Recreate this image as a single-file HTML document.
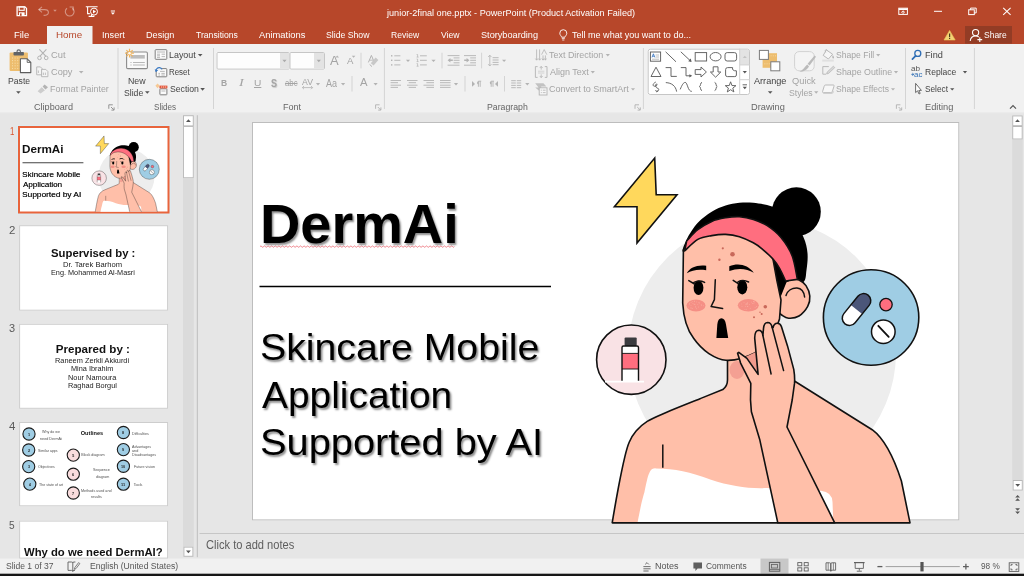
<!DOCTYPE html>
<html><head><meta charset="utf-8"><title>PowerPoint</title>
<style>
html,body{margin:0;padding:0;}
body{width:1024px;height:576px;overflow:hidden;position:relative;background:#E6E6E6;font-family:"Liberation Sans",sans-serif;}
.r{position:absolute;}
.t{position:absolute;white-space:nowrap;line-height:1;transform-origin:0 0;}
#tx{position:absolute;left:0;top:0;width:1024px;height:576px;will-change:transform;}
svg{position:absolute;left:0;top:0;overflow:visible;}
</style></head><body><div id="tx">
<svg width="1024" height="576" viewBox="0 0 1024 576"><rect x="0" y="0" width="1024" height="44" fill="#B7472A"/>
<rect x="47" y="26" width="45.5" height="18" fill="#F1F1F1"/>
<rect x="965" y="26" width="47" height="17.6" fill="#933C25"/>
<rect x="0" y="44" width="1024" height="68.5" fill="#F1F1F1"/>
<rect x="0" y="112.5" width="1024" height="1" fill="#ECECEC"/>
<rect x="0" y="113.5" width="1024" height="445" fill="#E6E6E6"/>
<rect x="0" y="558.5" width="1024" height="15.2" fill="#F1F1F1"/>
<rect x="760.5" y="558.5" width="28" height="15.2" fill="#C8C8C8"/>
<rect x="0" y="573.7" width="1024" height="2.3" fill="#161616"/>
<rect x="183" y="126" width="10.8" height="431" fill="#DBDBDB"/>
<rect x="183" y="115.2" width="10.8" height="11.2" fill="#fff"/><rect x="183.5" y="115.7" width="9.8" height="10.2" fill="none" stroke="#B8B8B8" stroke-width="1"/>
<rect x="183" y="126" width="10.8" height="52.2" fill="#fff"/><rect x="183.5" y="126.5" width="9.8" height="51.2" fill="none" stroke="#BDBDBD" stroke-width="1"/>
<rect x="183.4" y="546.6" width="10" height="10.2" fill="#fff"/><rect x="183.9" y="547.1" width="9" height="9.2" fill="none" stroke="#B8B8B8" stroke-width="1"/>
<rect x="196.8" y="115.2" width="1" height="442" fill="#BEBEBE"/>
<rect x="199.5" y="533" width="824.5" height="1" fill="#C6C6C6"/>
<rect x="1012.2" y="126" width="10.5" height="354" fill="#DBDBDB"/>
<rect x="1012.2" y="115.4" width="10.5" height="10.8" fill="#fff"/><rect x="1012.7" y="115.9" width="9.5" height="9.8" fill="none" stroke="#B8B8B8" stroke-width="1"/>
<rect x="1012.2" y="126" width="10.5" height="13.5" fill="#fff"/><rect x="1012.7" y="126.5" width="9.5" height="12.5" fill="none" stroke="#B8B8B8" stroke-width="1"/>
<rect x="1012.6" y="480" width="10.2" height="10.6" fill="#fff"/><rect x="1013.1" y="480.5" width="9.2" height="9.6" fill="none" stroke="#B8B8B8" stroke-width="1"/>
<rect x="252" y="122" width="707.3" height="398.4" fill="#fff"/><rect x="252.5" y="122.5" width="706.3" height="397.4" fill="none" stroke="#BDBDBD" stroke-width="1"/>
<rect x="117.5" y="48" width="1" height="61" fill="#D4D4D4"/>
<rect x="213.0" y="48" width="1" height="61" fill="#D4D4D4"/>
<rect x="383.9" y="48" width="1" height="61" fill="#D4D4D4"/>
<rect x="642.9" y="48" width="1" height="61" fill="#D4D4D4"/>
<rect x="905.0" y="48" width="1" height="61" fill="#D4D4D4"/>
<rect x="973.9" y="48" width="1" height="61" fill="#D4D4D4"/>
<rect x="360.5" y="52.7" width="1" height="15.700000000000003" fill="#D4D4D4"/>
<rect x="441.5" y="52.7" width="1" height="15.700000000000003" fill="#D4D4D4"/>
<rect x="481.1" y="52.7" width="1" height="15.700000000000003" fill="#D4D4D4"/>
<rect x="351.5" y="76" width="1" height="15.5" fill="#D4D4D4"/>
<rect x="464.5" y="76" width="1" height="15.5" fill="#D4D4D4"/>
<rect x="504.0" y="76" width="1" height="15.5" fill="#D4D4D4"/>
<rect x="216.5" y="52" width="73.5" height="17.6" fill="#FDFDFD" rx="1"/><rect x="217.0" y="52.5" width="72.5" height="16.6" fill="none" stroke="#C6C6C6" stroke-width="1" rx="1"/>
<rect x="280" y="53" width="9" height="15.6" fill="#E3E3E3"/>
<rect x="289.5" y="52" width="35.5" height="17.6" fill="#FDFDFD" rx="1"/><rect x="290.0" y="52.5" width="34.5" height="16.6" fill="none" stroke="#C6C6C6" stroke-width="1" rx="1"/>
<rect x="314" y="53" width="10" height="15.6" fill="#E3E3E3"/>
<rect x="647.7" y="48.7" width="102.3" height="46.3" fill="#fff" rx="2"/><rect x="648.2" y="49.2" width="101.3" height="45.3" fill="none" stroke="#C6C6C6" stroke-width="1" rx="2"/>
<rect x="739.7" y="49.7" width="9.3" height="15" fill="#E3E3E3"/>
<rect x="739.2" y="48.7" width="1" height="46.3" fill="#D0D0D0"/>
<rect x="739.7" y="64.4" width="10.3" height="1" fill="#D0D0D0"/>
<rect x="739.7" y="79.2" width="10.3" height="1" fill="#D0D0D0"/></svg>
<svg width="1024" height="576" viewBox="0 0 1024 576"><defs><clipPath id="sc"><rect x="253" y="123" width="705.5" height="397"/></clipPath><g id="art"><circle cx="762" cy="352.5" r="134" fill="#EDEDED"/>
<path d="M654.7,158L656.2,194.7L677,194.7L637,243L637,206.7L614.4,206.7Z" fill="#FFD85C" stroke="#111" stroke-width="1.6" stroke-linejoin="miter"/>
<path d="M612.2,522.8C613.2,516.8 616.4,498.1 618.5,487.0C620.6,475.9 623.2,463.6 625.0,456.1C626.8,448.6 627.4,446.4 629.2,442.2C631.1,438.0 633.1,434.6 636.1,431.1C639.1,427.6 642.1,424.5 647.2,421.4C652.3,418.2 657.9,416.0 666.7,412.2C675.5,408.4 690.6,402.5 700.0,398.7C709.4,394.9 719.0,391.1 722.8,389.6Q727.5,386 727.5,380L727.5,352L786,352L788,378L794.4,381L872.2,429.7C882,437 892,452 901.4,481L910,522.8Z" fill="#FFBFA9" stroke="#111" stroke-width="1.6" stroke-linejoin="round"/>
<ellipse cx="737" cy="370" rx="7.5" ry="9" fill="#F4A093"/>
<path d="M662.8,444.4V467.8" stroke="#111" stroke-width="1.5"/>
<path d="M637.5,522.8C641,505 642,500 644.4,492.2C647,480 648,475 650,471.5Q652,468 656,468.4C675,468.5 690,472 711,479.7C730,486 750,489 766.7,488L821,490.8Q832,492 832.5,502L833.3,522.8Z" fill="#fff"/>
<path d="M683.2,252.0C681.0,251.9 684.3,244.3 686.7,239.4C689.1,234.5 693.6,227.4 697.8,222.8C702.0,218.2 707.1,214.6 711.7,211.7C716.3,208.8 721.0,207.1 725.6,205.6C730.2,204.1 734.8,203.3 739.4,202.8C744.0,202.3 747.9,202.2 753.3,202.8C758.7,203.4 765.9,204.5 772.0,206.5C778.1,208.5 784.8,210.0 790.0,215.0C795.2,220.0 800.4,230.3 803.3,236.7C806.2,243.1 807.0,247.8 807.5,253.3C808.0,258.9 807.2,265.2 806.5,270.0C805.8,274.8 806.2,280.0 803.5,282.0C800.8,284.0 795.6,284.0 790.0,282.0C784.4,280.0 778.3,277.0 770.0,270.0C761.7,263.0 751.7,245.0 740.0,240.0C728.3,235.0 709.5,238.0 700.0,240.0C690.5,242.0 685.4,252.1 683.2,252.0Z" fill="#000"/>
<circle cx="796.4" cy="211.7" r="24.4" fill="#000"/>
<path d="M781.0,283.0C782.0,282.7 785.0,281.8 786.9,281.2C788.8,280.6 790.1,279.3 792.1,279.1C794.1,278.9 796.7,278.9 799.0,280.0C801.3,281.1 804.2,282.9 806.0,285.6C807.8,288.3 809.5,292.5 809.8,296.0C810.1,299.5 809.5,303.1 807.7,306.4C805.9,309.7 802.2,314.0 799.0,316.0C795.8,318.0 791.5,318.4 788.6,318.2C785.7,318.0 783.8,316.4 781.7,315.0C779.6,313.6 777.0,310.8 776.0,310.0Z" fill="#FFBFA9" stroke="#111" stroke-width="1.6"/>
<path d="M786,295.5C787.5,290.5 792,287.8 797,288C801.5,288.3 804,292 804.6,297" fill="none" stroke="#111" stroke-width="1.5" stroke-linecap="round"/>
<path d="M772,262L790,279L786.9,281.2L778.8,301.5L776,290Z" fill="#000"/>
<path d="M683.4,250L682.7,303C683.5,318 688,331 693.6,338.3C699,346 705,351 708.9,353.6C715,357.5 721,360 726,360.3C736,360.8 746,357.5 754.7,353C765,347 775,334 779.5,319L781,300L777,281L772.8,258L760,240L740,228L712,228L695,234Z" fill="#FFBFA9" stroke="#111" stroke-width="1.6" stroke-linejoin="round"/>
<path d="M686.7,240.8C688.6,239.0 693.6,232.9 697.8,229.7C702.0,226.5 707.1,223.4 711.7,221.4C716.3,219.4 721.0,218.6 725.6,217.8C730.2,217.0 734.8,216.4 739.4,216.7C744.0,217.0 748.7,217.9 753.3,219.4C757.9,220.9 762.6,222.6 767.2,225.6C771.8,228.6 776.8,232.4 781.0,237.5C785.2,242.6 789.5,249.0 792.2,256.0C794.9,263.0 796.5,275.5 797.4,279.4L785.6,281.0C784.6,278.9 781.8,272.3 779.7,268.6C777.6,264.9 775.8,262.2 772.8,258.9C769.8,255.6 765.0,251.3 761.7,248.6C758.5,245.9 757.0,244.8 753.3,242.8C749.6,240.8 744.0,238.1 739.4,236.7C734.8,235.3 730.2,234.6 725.6,234.4C721.0,234.2 716.3,234.8 711.7,235.6C707.1,236.4 702.3,236.8 697.8,239.4C693.3,242.0 686.8,249.1 684.6,251.0Z" fill="#FF6E7F" stroke="#111" stroke-width="1.6" stroke-linejoin="round"/>
<path d="M686.8,273.2C690,267.5 697,264.6 706.2,265.8L706.2,270.3C698,269 692,270.3 686.8,273.2Z" fill="#000"/>
<path d="M729.3,271L729.3,266.3C738,262.6 748,264.5 753.8,272.8C747,268.4 738,267.6 729.3,271Z" fill="#000"/>
<ellipse cx="698.5" cy="287.8" rx="4.9" ry="7.3" fill="#000"/>
<ellipse cx="742.3" cy="287.2" rx="5" ry="7.3" fill="#000"/>
<path d="M688.8,280.6L694.5,284M694,282.4Q699,279.6 704.6,282.4M733.2,280.4L738.2,283.6M738,281.8Q743,279.2 748.6,282" stroke="#111" stroke-width="1.5" fill="none" stroke-linecap="round"/>
<path d="M715.3,279.7L714.4,299.6L711.1,306.5L722.6,308.6" fill="none" stroke="#111" stroke-width="1.5" stroke-linejoin="round" stroke-linecap="round"/>
<ellipse cx="696" cy="305.4" rx="9.5" ry="6" fill="#F58F85"/>
<ellipse cx="748.3" cy="305.3" rx="10.5" ry="6.2" fill="#F58F85"/>
<circle cx="696.4" cy="308.8" r="0.45" fill="#FBB3A6"/>
<circle cx="691.7" cy="308.0" r="0.45" fill="#FBB3A6"/>
<circle cx="694.6" cy="304.6" r="0.45" fill="#FBB3A6"/>
<circle cx="703.3" cy="305.7" r="0.45" fill="#FBB3A6"/>
<circle cx="695.8" cy="307.6" r="0.45" fill="#FBB3A6"/>
<circle cx="701.5" cy="305.3" r="0.45" fill="#FBB3A6"/>
<circle cx="698.9" cy="302.7" r="0.45" fill="#FBB3A6"/>
<circle cx="694.0" cy="304.0" r="0.45" fill="#FBB3A6"/>
<circle cx="691.1" cy="302.2" r="0.45" fill="#FBB3A6"/>
<circle cx="689.2" cy="304.8" r="0.45" fill="#FBB3A6"/>
<circle cx="695.0" cy="304.4" r="0.45" fill="#FBB3A6"/>
<circle cx="696.3" cy="301.9" r="0.45" fill="#FBB3A6"/>
<circle cx="695.6" cy="306.2" r="0.45" fill="#FBB3A6"/>
<circle cx="699.7" cy="303.0" r="0.45" fill="#FBB3A6"/>
<circle cx="694.5" cy="301.2" r="0.45" fill="#FBB3A6"/>
<circle cx="694.3" cy="301.1" r="0.45" fill="#FBB3A6"/>
<circle cx="690.3" cy="307.9" r="0.45" fill="#FBB3A6"/>
<circle cx="688.7" cy="306.9" r="0.45" fill="#FBB3A6"/>
<circle cx="697.8" cy="304.4" r="0.45" fill="#FBB3A6"/>
<circle cx="698.4" cy="307.0" r="0.45" fill="#FBB3A6"/>
<circle cx="701.2" cy="304.7" r="0.45" fill="#FBB3A6"/>
<circle cx="692.9" cy="303.6" r="0.45" fill="#FBB3A6"/>
<circle cx="691.0" cy="305.3" r="0.45" fill="#FBB3A6"/>
<circle cx="692.4" cy="308.2" r="0.45" fill="#FBB3A6"/>
<circle cx="689.4" cy="303.2" r="0.45" fill="#FBB3A6"/>
<circle cx="692.8" cy="301.4" r="0.45" fill="#FBB3A6"/>
<circle cx="753.9" cy="301.6" r="0.45" fill="#FBB3A6"/>
<circle cx="746.6" cy="303.6" r="0.45" fill="#FBB3A6"/>
<circle cx="754.0" cy="301.7" r="0.45" fill="#FBB3A6"/>
<circle cx="753.9" cy="303.3" r="0.45" fill="#FBB3A6"/>
<circle cx="747.4" cy="303.2" r="0.45" fill="#FBB3A6"/>
<circle cx="751.6" cy="302.1" r="0.45" fill="#FBB3A6"/>
<circle cx="747.8" cy="306.5" r="0.45" fill="#FBB3A6"/>
<circle cx="753.7" cy="301.5" r="0.45" fill="#FBB3A6"/>
<circle cx="755.1" cy="307.6" r="0.45" fill="#FBB3A6"/>
<circle cx="745.3" cy="306.3" r="0.45" fill="#FBB3A6"/>
<circle cx="746.2" cy="309.3" r="0.45" fill="#FBB3A6"/>
<circle cx="749.6" cy="304.6" r="0.45" fill="#FBB3A6"/>
<circle cx="746.9" cy="304.6" r="0.45" fill="#FBB3A6"/>
<circle cx="747.3" cy="302.6" r="0.45" fill="#FBB3A6"/>
<circle cx="754.8" cy="302.1" r="0.45" fill="#FBB3A6"/>
<circle cx="739.3" cy="305.1" r="0.45" fill="#FBB3A6"/>
<circle cx="747.4" cy="306.5" r="0.45" fill="#FBB3A6"/>
<circle cx="747.0" cy="304.8" r="0.45" fill="#FBB3A6"/>
<circle cx="750.2" cy="308.2" r="0.45" fill="#FBB3A6"/>
<circle cx="745.6" cy="304.1" r="0.45" fill="#FBB3A6"/>
<circle cx="756.4" cy="306.5" r="0.45" fill="#FBB3A6"/>
<circle cx="744.9" cy="309.6" r="0.45" fill="#FBB3A6"/>
<circle cx="752.7" cy="303.5" r="0.45" fill="#FBB3A6"/>
<circle cx="742.0" cy="306.2" r="0.45" fill="#FBB3A6"/>
<circle cx="744.0" cy="302.4" r="0.45" fill="#FBB3A6"/>
<circle cx="741.7" cy="303.9" r="0.45" fill="#FBB3A6"/>
<circle cx="732.5" cy="254.2" r="2.3" fill="#C9685A"/>
<circle cx="722.8" cy="248.3" r="1.1" fill="#C9685A"/>
<circle cx="719.4" cy="259.7" r="1.2" fill="#C9685A"/>
<circle cx="765.3" cy="306.7" r="1.8" fill="#C9685A"/>
<circle cx="761.7" cy="313.9" r="1" fill="#C9685A"/>
<circle cx="754" cy="317.3" r="1" fill="#C9685A"/>
<circle cx="760" cy="312.3" r="0.7" fill="#C9685A"/>
<path d="M716.4,338L717.3,324.5Q718,318.2 721.4,318.2Q725,318.2 726,324.5L728.2,338Z" fill="#000"/>
<path d="M744,357.5L756,352L758.5,375Z" fill="#F29A8C"/>
<path d="M777.8,522.8L759.7,439.4L751.4,411.7L750.5,400.0L750.8,383.4L746.9,375.6L740.6,363.1L737.6,353.2L738.8,352.4L746.9,358.4L758.1,374.4L754.7,338.1Q754.8,330.5 758.6,330.3Q762.2,330.3 762.9,335.5L763.5,328.5Q764,322.6 767.6,322.5Q771.2,322.5 772.2,327.5L773.1,327.5Q774,323.3 777.3,323.3Q780.4,323.3 781.4,326.6L787.5,345.9L793.75,369.4Q795,377 794.5,383.4L792.2,400L787,427L834.7,522.8Z" fill="#FFBFA9" stroke="#111" stroke-width="1.6" stroke-linejoin="round"/>
<path d="M762.9,335.5L771.1,374M772.2,327.5L783.6,370.6" stroke="#111" stroke-width="1.5" fill="none" stroke-linecap="round"/>
<path d="M612.2,522.8H910" stroke="#111" stroke-width="1.6"/>
<circle cx="631.3" cy="359.7" r="34.7" fill="#F9E2E5" stroke="#111" stroke-width="1.6"/>
<rect x="624.6" y="337.4" width="12.1" height="8.6" rx="1" fill="#3B3B3F"/>
<rect x="622" y="346" width="16.5" height="35" fill="#fff"/>
<rect x="622" y="353.4" width="16.5" height="15.6" fill="#FF6E7F"/>
<path d="M622,381V347.5Q622,346 623.5,346H637Q638.5,346 638.5,347.5V381" fill="none" stroke="#111" stroke-width="1.4"/>
<path d="M622,353.4H638.5M622,369H638.5" stroke="#111" stroke-width="0.9"/>
<path d="M605,381.6H644" stroke="#fff" stroke-width="1.6"/>
<circle cx="871.1" cy="317.5" r="47.7" fill="#9FCDE4" stroke="#111" stroke-width="1.6"/>
<g transform="rotate(-51 856.5 309.5)"><rect x="838.1" y="302.25" width="36.8" height="14.5" rx="7.25" fill="#fff"/><path d="M856.5,302.25H867.65A7.25,7.25 0 0 1 867.65,316.75H856.5Z" fill="#4B5679"/><rect x="838.1" y="302.25" width="36.8" height="14.5" rx="7.25" fill="none" stroke="#111" stroke-width="1.5"/></g>
<circle cx="886" cy="304.6" r="6.2" fill="#FF6E7F" stroke="#111" stroke-width="1.3"/>
<circle cx="883.3" cy="331.7" r="11.8" fill="#fff" stroke="#111" stroke-width="1.5"/>
<path d="M878.3,325.8L888.7,336.9" stroke="#111" stroke-width="1.8" stroke-linecap="round"/></g></defs>
<use href="#art"/>
<path d="M259.5,286.4H551" stroke="#000" stroke-width="1.5"/>
<path d="M260,246.6q0.9,-1.3 1.8,0t1.8,0q0.9,-1.3 1.8,0t1.8,0q0.9,-1.3 1.8,0t1.8,0q0.9,-1.3 1.8,0t1.8,0q0.9,-1.3 1.8,0t1.8,0q0.9,-1.3 1.8,0t1.8,0q0.9,-1.3 1.8,0t1.8,0q0.9,-1.3 1.8,0t1.8,0q0.9,-1.3 1.8,0t1.8,0q0.9,-1.3 1.8,0t1.8,0q0.9,-1.3 1.8,0t1.8,0q0.9,-1.3 1.8,0t1.8,0q0.9,-1.3 1.8,0t1.8,0q0.9,-1.3 1.8,0t1.8,0q0.9,-1.3 1.8,0t1.8,0q0.9,-1.3 1.8,0t1.8,0q0.9,-1.3 1.8,0t1.8,0q0.9,-1.3 1.8,0t1.8,0q0.9,-1.3 1.8,0t1.8,0q0.9,-1.3 1.8,0t1.8,0q0.9,-1.3 1.8,0t1.8,0q0.9,-1.3 1.8,0t1.8,0q0.9,-1.3 1.8,0t1.8,0q0.9,-1.3 1.8,0t1.8,0q0.9,-1.3 1.8,0t1.8,0q0.9,-1.3 1.8,0t1.8,0q0.9,-1.3 1.8,0t1.8,0q0.9,-1.3 1.8,0t1.8,0q0.9,-1.3 1.8,0t1.8,0q0.9,-1.3 1.8,0t1.8,0q0.9,-1.3 1.8,0t1.8,0q0.9,-1.3 1.8,0t1.8,0q0.9,-1.3 1.8,0t1.8,0q0.9,-1.3 1.8,0t1.8,0q0.9,-1.3 1.8,0t1.8,0q0.9,-1.3 1.8,0t1.8,0q0.9,-1.3 1.8,0t1.8,0q0.9,-1.3 1.8,0t1.8,0q0.9,-1.3 1.8,0t1.8,0q0.9,-1.3 1.8,0t1.8,0q0.9,-1.3 1.8,0t1.8,0q0.9,-1.3 1.8,0t1.8,0q0.9,-1.3 1.8,0t1.8,0q0.9,-1.3 1.8,0t1.8,0q0.9,-1.3 1.8,0t1.8,0q0.9,-1.3 1.8,0t1.8,0q0.9,-1.3 1.8,0t1.8,0q0.9,-1.3 1.8,0t1.8,0q0.9,-1.3 1.8,0t1.8,0q0.9,-1.3 1.8,0t1.8,0q0.9,-1.3 1.8,0t1.8,0q0.9,-1.3 1.8,0t1.8,0q0.9,-1.3 1.8,0t1.8,0q0.9,-1.3 1.8,0t1.8,0" fill="none" stroke="#E8505B" stroke-width="0.7"/>
</svg>
<span class="t" style="left:259.77px;top:195.96px;font-size:56.4px;color:#000;font-weight:bold;transform:scaleX(0.9908);text-shadow:1.5px 1.5px 2px rgba(0,0,0,.45);">DermAi</span>
<span class="t" style="left:260.23px;top:328.95px;font-size:37px;color:#000;transform:scaleX(1.0611);text-shadow:1.5px 1.5px 2px rgba(0,0,0,.45);">Skincare Mobile</span>
<span class="t" style="left:262.00px;top:376.95px;font-size:37px;color:#000;transform:scaleX(1.0508);text-shadow:1.5px 1.5px 2px rgba(0,0,0,.45);">Application</span>
<span class="t" style="left:260.21px;top:423.75px;font-size:37px;color:#000;transform:scaleX(1.0753);text-shadow:1.5px 1.5px 2px rgba(0,0,0,.45);">Supported by AI</span>
<svg width="1024" height="576" viewBox="0 0 1024 576">
<rect x="17.5" y="125.5" width="152.8" height="88.6" fill="none" stroke="#DCECF2" stroke-width="1"/>
<rect x="19" y="127" width="149.5" height="85.5" fill="#fff" stroke="#E8643C" stroke-width="2"/>
<rect x="19.1" y="225.2" width="149" height="85.5" fill="#fff"/><rect x="19.6" y="225.7" width="148" height="84.5" fill="none" stroke="#CDCDCD" stroke-width="1"/>
<rect x="19.1" y="323.8" width="149" height="85" fill="#fff"/><rect x="19.6" y="324.3" width="148" height="84" fill="none" stroke="#CDCDCD" stroke-width="1"/>
<rect x="19.1" y="422" width="149" height="84.3" fill="#fff"/><rect x="19.6" y="422.5" width="148" height="83.3" fill="none" stroke="#CDCDCD" stroke-width="1"/>
<rect x="19.1" y="520.6" width="149" height="38" fill="#fff"/><rect x="19.6" y="521.1" width="148" height="37" fill="none" stroke="#CDCDCD" stroke-width="1"/>
<defs><clipPath id="tc"><rect x="253" y="123" width="705" height="397"/></clipPath></defs><g transform="translate(20,128.6) scale(0.2092) translate(-253,-123)"><g clip-path="url(#tc)"><use href="#art"/></g><path d="M265,286.4H556" stroke="#444" stroke-width="5"/></g>
<circle cx="29" cy="434" r="6.1" fill="#9FCDE4" stroke="#1a1a1a" stroke-width="1.1"/>
<circle cx="28.7" cy="450" r="6.1" fill="#9FCDE4" stroke="#1a1a1a" stroke-width="1.1"/>
<circle cx="28.7" cy="466.6" r="6.1" fill="#9FCDE4" stroke="#1a1a1a" stroke-width="1.1"/>
<circle cx="29.8" cy="484.1" r="6.1" fill="#9FCDE4" stroke="#1a1a1a" stroke-width="1.1"/>
<circle cx="73.3" cy="455.1" r="6.1" fill="#F9DCDD" stroke="#1a1a1a" stroke-width="1.1"/>
<circle cx="73.3" cy="474.2" r="6.1" fill="#F9DCDD" stroke="#1a1a1a" stroke-width="1.1"/>
<circle cx="73.3" cy="493" r="6.1" fill="#F9DCDD" stroke="#1a1a1a" stroke-width="1.1"/>
<circle cx="123.4" cy="432.5" r="6.1" fill="#9FCDE4" stroke="#1a1a1a" stroke-width="1.1"/>
<circle cx="123.4" cy="449.6" r="6.1" fill="#9FCDE4" stroke="#1a1a1a" stroke-width="1.1"/>
<circle cx="123.4" cy="466.25" r="6.1" fill="#9FCDE4" stroke="#1a1a1a" stroke-width="1.1"/>
<circle cx="123.4" cy="484.2" r="6.1" fill="#9FCDE4" stroke="#1a1a1a" stroke-width="1.1"/>
</svg>
<span class="t" style="left:9.71px;top:126.22px;font-size:10.8px;color:#D9532C;transform:scaleX(0.7237);">1</span>
<span class="t" style="left:8.63px;top:224.82px;font-size:10.8px;color:#5A5A5A;transform:scaleX(1.0582);">2</span>
<span class="t" style="left:8.96px;top:323.22px;font-size:10.8px;color:#5A5A5A;transform:scaleX(1.0136);">3</span>
<span class="t" style="left:8.77px;top:420.82px;font-size:10.8px;color:#5A5A5A;transform:scaleX(1.0634);">4</span>
<span class="t" style="left:9.40px;top:519.62px;font-size:10.8px;color:#5A5A5A;transform:scaleX(0.9357);">5</span>
<span class="t" style="left:22.32px;top:143.43px;font-size:11.6px;color:#111;font-weight:bold;transform:scaleX(1.0078);">DermAi</span>
<span class="t" style="left:22.41px;top:170.78px;font-size:7.9px;color:#111;transform:scaleX(1.0396);text-shadow:0.3px 0.3px 0.6px rgba(0,0,0,.7);">Skincare Mobile</span>
<span class="t" style="left:22.78px;top:180.78px;font-size:7.9px;color:#111;transform:scaleX(1.0098);text-shadow:0.3px 0.3px 0.6px rgba(0,0,0,.7);">Application</span>
<span class="t" style="left:22.41px;top:190.59px;font-size:7.9px;color:#111;transform:scaleX(1.0535);text-shadow:0.3px 0.3px 0.6px rgba(0,0,0,.7);">Supported by AI</span>
<span class="t" style="left:51.46px;top:247.14px;font-size:11.6px;color:#111;font-weight:bold;transform:scaleX(0.9775);">Supervised by :</span>
<span class="t" style="left:63.39px;top:260.85px;font-size:7px;color:#222;transform:scaleX(1.0874);">Dr. Tarek Barhom</span>
<span class="t" style="left:50.62px;top:269.05px;font-size:7px;color:#222;transform:scaleX(1.0417);">Eng. Mohammed Al-Masri</span>
<span class="t" style="left:55.84px;top:343.14px;font-size:11.6px;color:#111;font-weight:bold;">Prepared by :</span>
<span class="t" style="left:55.41px;top:356.95px;font-size:7px;color:#222;transform:scaleX(1.0523);">Raneem Zerkli Akkurdi</span>
<span class="t" style="left:71.11px;top:365.05px;font-size:7px;color:#222;transform:scaleX(1.0470);">Mina Ibrahim</span>
<span class="t" style="left:68.21px;top:374.05px;font-size:7px;color:#222;transform:scaleX(1.0546);">Nour Namoura</span>
<span class="t" style="left:68.21px;top:382.25px;font-size:7px;color:#222;transform:scaleX(1.0465);">Raghad Borgul</span>
<span class="t" style="left:80.78px;top:431.04px;font-size:5.6px;color:#111;font-weight:bold;">Outlines</span>
<span class="t" style="left:41.68px;top:431.36px;font-size:3.7px;color:#3a3a3a;transform:scaleX(0.9828);opacity:.9;">Why do we</span>
<span class="t" style="left:39.86px;top:437.86px;font-size:3.7px;color:#3a3a3a;transform:scaleX(1.0138);opacity:.9;">need DermAi</span>
<span class="t" style="left:38.44px;top:449.86px;font-size:3.7px;color:#3a3a3a;transform:scaleX(0.9674);opacity:.9;">Similar apps</span>
<span class="t" style="left:38.44px;top:466.25px;font-size:3.7px;color:#3a3a3a;transform:scaleX(0.9716);opacity:.9;">Objectives</span>
<span class="t" style="left:38.83px;top:484.46px;font-size:3.7px;color:#3a3a3a;transform:scaleX(0.9722);opacity:.9;">The state of art</span>
<span class="t" style="left:81.30px;top:454.36px;font-size:3.7px;color:#3a3a3a;opacity:.9;">Block diagram</span>
<span class="t" style="left:92.63px;top:469.46px;font-size:3.7px;color:#3a3a3a;transform:scaleX(1.0162);opacity:.9;">Sequence</span>
<span class="t" style="left:95.95px;top:476.25px;font-size:3.7px;color:#3a3a3a;transform:scaleX(0.9933);opacity:.9;">diagram</span>
<span class="t" style="left:81.30px;top:489.56px;font-size:3.7px;color:#3a3a3a;transform:scaleX(1.0068);opacity:.9;">Methods used and</span>
<span class="t" style="left:91.16px;top:496.16px;font-size:3.7px;color:#3a3a3a;transform:scaleX(1.0070);opacity:.9;">results</span>
<span class="t" style="left:132.10px;top:433.25px;font-size:3.7px;color:#3a3a3a;opacity:.9;">Difficulties</span>
<span class="t" style="left:132.40px;top:446.36px;font-size:3.7px;color:#3a3a3a;transform:scaleX(0.9791);opacity:.9;">Advantages</span>
<span class="t" style="left:132.25px;top:450.25px;font-size:3.7px;color:#3a3a3a;transform:scaleX(1.0222);opacity:.9;">and</span>
<span class="t" style="left:132.11px;top:454.36px;font-size:3.7px;color:#3a3a3a;transform:scaleX(0.9896);opacity:.9;">Disadvantages</span>
<span class="t" style="left:133.51px;top:466.46px;font-size:3.7px;color:#3a3a3a;transform:scaleX(0.9929);opacity:.9;">Future vision</span>
<span class="t" style="left:133.73px;top:483.66px;font-size:3.7px;color:#3a3a3a;opacity:.9;">Tools</span>
<span class="t" style="left:27.87px;top:433.54px;font-size:3.6px;color:#222;font-weight:bold;transform:scaleX(1.0638);">1</span>
<span class="t" style="left:27.67px;top:449.54px;font-size:3.6px;color:#222;font-weight:bold;transform:scaleX(1.0417);">2</span>
<span class="t" style="left:27.71px;top:466.14px;font-size:3.6px;color:#222;font-weight:bold;transform:scaleX(1.0101);">3</span>
<span class="t" style="left:28.85px;top:483.64px;font-size:3.6px;color:#222;font-weight:bold;transform:scaleX(0.9346);">4</span>
<span class="t" style="left:72.29px;top:454.64px;font-size:3.6px;color:#222;font-weight:bold;">5</span>
<span class="t" style="left:72.27px;top:473.74px;font-size:3.6px;color:#222;font-weight:bold;transform:scaleX(1.0309);">6</span>
<span class="t" style="left:72.25px;top:492.54px;font-size:3.6px;color:#222;font-weight:bold;transform:scaleX(1.0526);">7</span>
<span class="t" style="left:122.39px;top:432.04px;font-size:3.6px;color:#222;font-weight:bold;transform:scaleX(1.0101);">8</span>
<span class="t" style="left:122.37px;top:449.14px;font-size:3.6px;color:#222;font-weight:bold;transform:scaleX(1.0309);">9</span>
<span class="t" style="left:121.27px;top:465.79px;font-size:3.6px;color:#222;font-weight:bold;transform:scaleX(1.0451);">10</span>
<span class="t" style="left:121.26px;top:483.74px;font-size:3.6px;color:#222;font-weight:bold;transform:scaleX(1.0882);">11</span>
<span class="t" style="left:24.40px;top:546.51px;font-size:11.4px;color:#111;font-weight:bold;transform:scaleX(0.9909);">Why do we need DermAI?</span>
<span class="t" style="left:386.53px;top:7.91px;font-size:9.4px;color:#fff;transform:scaleX(0.9715);">junior-2final one.pptx - PowerPoint (Product Activation Failed)</span>
<span class="t" style="left:14.25px;top:29.54px;font-size:9.6px;color:#fff;transform:scaleX(0.9820);">File</span>
<span class="t" style="left:56.21px;top:29.54px;font-size:9.6px;color:#B7472A;transform:scaleX(1.0253);">Home</span>
<span class="t" style="left:102.38px;top:29.54px;font-size:9.6px;color:#fff;transform:scaleX(0.9529);">Insert</span>
<span class="t" style="left:146.37px;top:29.54px;font-size:9.6px;color:#fff;transform:scaleX(0.9486);">Design</span>
<span class="t" style="left:195.83px;top:29.54px;font-size:9.6px;color:#fff;transform:scaleX(0.8984);">Transitions</span>
<span class="t" style="left:259.40px;top:29.54px;font-size:9.6px;color:#fff;transform:scaleX(0.9759);">Animations</span>
<span class="t" style="left:326.31px;top:29.54px;font-size:9.6px;color:#fff;transform:scaleX(0.9052);">Slide Show</span>
<span class="t" style="left:390.71px;top:29.54px;font-size:9.6px;color:#fff;transform:scaleX(0.8952);">Review</span>
<span class="t" style="left:440.96px;top:29.54px;font-size:9.6px;color:#fff;transform:scaleX(0.8984);">View</span>
<span class="t" style="left:480.59px;top:29.54px;font-size:9.6px;color:#fff;transform:scaleX(0.9539);">Storyboarding</span>
<span class="t" style="left:572.32px;top:29.54px;font-size:9.6px;color:#fff;transform:scaleX(0.9412);">Tell me what you want to do...</span>
<span class="t" style="left:983.62px;top:30.04px;font-size:9.6px;color:#fff;transform:scaleX(0.8859);">Share</span>
<span class="t" style="left:33.54px;top:101.71px;font-size:9.4px;color:#666;transform:scaleX(0.9706);">Clipboard</span>
<span class="t" style="left:154.13px;top:101.71px;font-size:9.4px;color:#666;transform:scaleX(0.8647);">Slides</span>
<span class="t" style="left:282.87px;top:101.71px;font-size:9.4px;color:#666;transform:scaleX(0.9666);">Font</span>
<span class="t" style="left:487.30px;top:101.71px;font-size:9.4px;color:#666;transform:scaleX(0.9310);">Paragraph</span>
<span class="t" style="left:751.26px;top:101.71px;font-size:9.4px;color:#666;transform:scaleX(0.9853);">Drawing</span>
<span class="t" style="left:925.26px;top:101.71px;font-size:9.4px;color:#666;transform:scaleX(0.9871);">Editing</span>
<span class="t" style="left:7.81px;top:75.64px;font-size:9.6px;color:#444;transform:scaleX(0.9002);">Paste</span>
<span class="t" style="left:50.53px;top:50.34px;font-size:9.6px;color:#A4A4A4;transform:scaleX(0.9722);">Cut</span>
<span class="t" style="left:50.54px;top:67.14px;font-size:9.6px;color:#A4A4A4;transform:scaleX(0.9573);">Copy</span>
<span class="t" style="left:50.29px;top:84.34px;font-size:9.6px;color:#A4A4A4;transform:scaleX(0.9273);">Format Painter</span>
<span class="t" style="left:128.29px;top:75.84px;font-size:9.6px;color:#444;transform:scaleX(0.9199);">New</span>
<span class="t" style="left:124.11px;top:88.24px;font-size:9.6px;color:#444;transform:scaleX(0.9026);">Slide</span>
<span class="t" style="left:169.29px;top:50.34px;font-size:9.6px;color:#444;transform:scaleX(0.9291);">Layout</span>
<span class="t" style="left:169.37px;top:67.14px;font-size:9.6px;color:#444;transform:scaleX(0.8251);">Reset</span>
<span class="t" style="left:169.61px;top:84.34px;font-size:9.6px;color:#444;transform:scaleX(0.9044);">Section</span>
<span class="t" style="left:549.42px;top:50.34px;font-size:9.6px;color:#A4A4A4;transform:scaleX(0.9317);">Text Direction</span>
<span class="t" style="left:549.60px;top:67.14px;font-size:9.6px;color:#A4A4A4;transform:scaleX(0.9377);">Align Text</span>
<span class="t" style="left:549.15px;top:84.34px;font-size:9.6px;color:#A4A4A4;transform:scaleX(0.9420);">Convert to SmartArt</span>
<span class="t" style="left:754.00px;top:75.64px;font-size:9.6px;color:#444;transform:scaleX(0.9497);">Arrange</span>
<span class="t" style="left:792.28px;top:75.64px;font-size:9.6px;color:#A4A4A4;transform:scaleX(0.9670);">Quick</span>
<span class="t" style="left:788.61px;top:88.24px;font-size:9.6px;color:#A4A4A4;transform:scaleX(0.9058);">Styles</span>
<span class="t" style="left:836.31px;top:50.34px;font-size:9.6px;color:#A4A4A4;transform:scaleX(0.8963);">Shape Fill</span>
<span class="t" style="left:836.30px;top:67.14px;font-size:9.6px;color:#A4A4A4;transform:scaleX(0.9224);">Shape Outline</span>
<span class="t" style="left:836.32px;top:84.34px;font-size:9.6px;color:#A4A4A4;transform:scaleX(0.8887);">Shape Effects</span>
<span class="t" style="left:924.77px;top:50.34px;font-size:9.6px;color:#444;transform:scaleX(0.9549);">Find</span>
<span class="t" style="left:924.82px;top:67.14px;font-size:9.6px;color:#444;transform:scaleX(0.8903);">Replace</span>
<span class="t" style="left:925.13px;top:84.34px;font-size:9.6px;color:#444;transform:scaleX(0.8601);">Select</span>
<span class="t" style="left:221.25px;top:78.44px;font-size:9.6px;color:#A4A4A4;font-weight:bold;transform:scaleX(0.8880);">B</span>
<span class="t" style="left:238.73px;top:78.44px;font-size:9.6px;color:#A4A4A4;font-style:italic;transform:scaleX(1.4815);font-family:'Liberation Serif',serif;">I</span>
<span class="t" style="left:253.74px;top:78.58px;font-size:9.2px;color:#A4A4A4;transform:scaleX(1.1060);text-decoration:underline;">U</span>
<span class="t" style="left:271.33px;top:77.99px;font-size:10.6px;color:#A4A4A4;font-weight:bold;transform:scaleX(0.8491);text-shadow:1px 1px 1px #ccc;">S</span>
<span class="t" style="left:284.69px;top:78.89px;font-size:8.6px;color:#A4A4A4;transform:scaleX(0.9031);text-decoration:line-through;">abc</span>
<span class="t" style="left:302.00px;top:77.66px;font-size:8.4px;color:#A4A4A4;transform:scaleX(1.0434);">AV</span>
<span class="t" style="left:326.00px;top:77.99px;font-size:10.6px;color:#A4A4A4;transform:scaleX(0.8506);">Aa</span>
<span class="t" style="left:360.00px;top:77.17px;font-size:11.8px;color:#A4A4A4;transform:scaleX(0.9558);">A</span>
<span class="t" style="left:329.80px;top:53.95px;font-size:13px;color:#A4A4A4;transform:scaleX(0.9948);">A</span>
<span class="t" style="left:346.60px;top:57.18px;font-size:9.2px;color:#A4A4A4;transform:scaleX(1.0461);">A</span>
<span class="t" style="left:910.87px;top:64.94px;font-size:7.6px;color:#555;transform:scaleX(1.0731);">ab</span>
<span class="t" style="left:914.48px;top:70.74px;font-size:7.6px;color:#2E6DB4;transform:scaleX(1.0367);">ac</span>
<span class="t" style="left:5.62px;top:561.58px;font-size:9.2px;color:#555;transform:scaleX(0.9288);">Slide 1 of 37</span>
<span class="t" style="left:89.81px;top:561.58px;font-size:9.2px;color:#555;transform:scaleX(0.9377);">English (United States)</span>
<span class="t" style="left:654.78px;top:561.58px;font-size:9.2px;color:#555;transform:scaleX(0.9802);">Notes</span>
<span class="t" style="left:705.58px;top:561.58px;font-size:9.2px;color:#555;transform:scaleX(0.9153);">Comments</span>
<span class="t" style="left:980.63px;top:561.58px;font-size:9.2px;color:#555;transform:scaleX(0.8992);">98 %</span>
<span class="t" style="left:206.04px;top:539.16px;font-size:12.4px;color:#5E5E5E;transform:scaleX(0.8962);">Click to add notes</span>
<svg width="1024" height="576" viewBox="0 0 1024 576"><path d="M17.1,6.9H25L26.5,8.4V15.7H17.1Z" fill="none" stroke="#fff" stroke-width="1.3" stroke-linejoin="miter"/>
<rect x="19.2" y="6.9" width="5" height="3.4" fill="none" stroke="#fff" stroke-width="1.1"/>
<rect x="19" y="12.3" width="5.6" height="3.6" fill="#fff"/><rect x="20" y="13.4" width="1.6" height="2.4" fill="#B7472A"/>
<path d="M38.8,9.6H44.6C47.6,9.6 48.4,11.2 48.4,12.4C48.4,14.2 46.4,15.3 43.6,15.4" fill="none" stroke="rgba(255,255,255,.42)" stroke-width="1.1"/>
<path d="M42,6.8L38.8,9.6L42,12.4" fill="none" stroke="rgba(255,255,255,.42)" stroke-width="1.1"/>
<path d="M53.20,9.80h3.6l-1.8,2z" fill="rgba(255,255,255,.42)"/>
<path d="M72.4,8.2A4.4,4.4 0 1 1 67,8.2" fill="none" stroke="rgba(255,255,255,.42)" stroke-width="1.1"/>
<path d="M69.6,7H73.2V10.4" fill="none" stroke="rgba(255,255,255,.42)" stroke-width="1.1"/>
<path d="M85.8,6.8H97.6M87.6,6.8V13.6H89.8M91.6,13.8V16.2M88.6,16.4H94.4" fill="none" stroke="#fff" stroke-width="1.1"/>
<circle cx="94" cy="11.6" r="3.5" fill="#B7472A" stroke="#fff" stroke-width="1"/><path d="M93,9.8L96,11.6L93,13.4Z" fill="#fff"/>
<path d="M110.8,11H115" stroke="#fff" stroke-width="1"/><path d="M110.90,12.50h4l-2.0,2.2z" fill="#fff"/>
<rect x="898.8" y="8.2" width="8.6" height="6.2" fill="none" stroke="#fff" stroke-width="1"/><path d="M898.8,9.2H907.4" stroke="#fff" stroke-width="1.6"/><path d="M901.2,12.6L903.1,10.8L905,12.6M903.1,11V14" fill="none" stroke="#fff" stroke-width="0.9"/>
<path d="M934,11.3H942" stroke="#fff" stroke-width="1"/>
<rect x="968.7" y="9.8" width="5.6" height="4.8" fill="none" stroke="#fff" stroke-width="1"/><path d="M970.6,9.8V8.1H976.2V12.9H974.4" fill="none" stroke="#fff" stroke-width="1"/>
<path d="M1003.2,7.8L1010.6,14.8M1010.6,7.8L1003.2,14.8" stroke="#fff" stroke-width="1.05"/>
<path d="M949.6,30.4L955.2,40H944Z" fill="#F3D275" stroke="#E9C456" stroke-width="0.6" stroke-linejoin="round"/><path d="M949.6,33.4V37" stroke="#4A3A1A" stroke-width="1.2"/><rect x="949" y="37.8" width="1.2" height="1.2" fill="#4A3A1A"/>
<circle cx="975.6" cy="32.6" r="3.1" fill="none" stroke="#fff" stroke-width="1.1"/><path d="M970.2,41C970.6,37.6 972.6,36 975.6,36C977,36 978,36.4 978.8,37" fill="none" stroke="#fff" stroke-width="1.1"/><path d="M977.4,39.6H982.2M979.8,37.2V42" stroke="#fff" stroke-width="1.1"/>
<path d="M561.6,37.2C561.4,35.8 559.8,35.2 559.8,33.2A3.5,3.5 0 0 1 566.8,33.2C566.8,35.2 565.2,35.8 565,37.2Z" fill="none" stroke="#fff" stroke-width="0.9"/><path d="M561.8,38.6H564.8M562.2,40H564.4" stroke="#fff" stroke-width="0.8"/>
<rect x="9.6" y="52.6" width="18.3" height="18.4" rx="1" fill="#EDBD6E"/>
<rect x="12.0" y="57.5" width="1" height="1" fill="#F7DDA9"/>
<rect x="12.0" y="60.1" width="1" height="1" fill="#F7DDA9"/>
<rect x="12.0" y="62.7" width="1" height="1" fill="#F7DDA9"/>
<rect x="12.0" y="65.3" width="1" height="1" fill="#F7DDA9"/>
<rect x="12.0" y="67.9" width="1" height="1" fill="#F7DDA9"/>
<rect x="14.6" y="57.5" width="1" height="1" fill="#F7DDA9"/>
<rect x="14.6" y="60.1" width="1" height="1" fill="#F7DDA9"/>
<rect x="14.6" y="62.7" width="1" height="1" fill="#F7DDA9"/>
<rect x="14.6" y="65.3" width="1" height="1" fill="#F7DDA9"/>
<rect x="14.6" y="67.9" width="1" height="1" fill="#F7DDA9"/>
<rect x="17.2" y="57.5" width="1" height="1" fill="#F7DDA9"/>
<rect x="17.2" y="60.1" width="1" height="1" fill="#F7DDA9"/>
<rect x="17.2" y="62.7" width="1" height="1" fill="#F7DDA9"/>
<rect x="17.2" y="65.3" width="1" height="1" fill="#F7DDA9"/>
<rect x="17.2" y="67.9" width="1" height="1" fill="#F7DDA9"/>
<rect x="19.8" y="57.5" width="1" height="1" fill="#F7DDA9"/>
<rect x="19.8" y="60.1" width="1" height="1" fill="#F7DDA9"/>
<rect x="19.8" y="62.7" width="1" height="1" fill="#F7DDA9"/>
<rect x="19.8" y="65.3" width="1" height="1" fill="#F7DDA9"/>
<rect x="19.8" y="67.9" width="1" height="1" fill="#F7DDA9"/>
<rect x="13.5" y="52" width="10.4" height="3.6" rx="0.8" fill="#606468"/><circle cx="18.7" cy="51.6" r="1.7" fill="none" stroke="#606468" stroke-width="1.1"/>
<path d="M20.4,58.8H27.2L30.8,62.4V72.6H20.4Z" fill="#fff" stroke="#5E5E5E" stroke-width="1.1" stroke-linejoin="round"/><path d="M27.2,58.8V62.4H30.8" fill="none" stroke="#5E5E5E" stroke-width="0.9"/>
<path d="M16.10,91.20h4.6l-2.3,2.6z" fill="#555"/>
<path d="M39.4,49.4L46,56.4M46.4,49.4L39.8,56.4" stroke="#B3B3B3" stroke-width="1.1"/><circle cx="39.5" cy="57.9" r="1.8" fill="none" stroke="#B3B3B3" stroke-width="1"/><circle cx="46.2" cy="57.9" r="1.8" fill="none" stroke="#B3B3B3" stroke-width="1"/>
<path d="M36.7,66.9H40.4L42,68.5V74.8H36.7Z" fill="#F4F4F4" stroke="#B3B3B3" stroke-width="0.9"/><path d="M41.6,69.4H45.8L47.9,71.5V76.7H41.6Z" fill="#F4F4F4" stroke="#B3B3B3" stroke-width="0.9"/><path d="M38.4,70.5V73M43.4,72.6V75M45.4,72.6V75" stroke="#B3B3B3" stroke-width="0.8"/>
<path d="M78.90,70.90h4.6l-2.3,2.6z" fill="#B3B3B3"/>
<path d="M44.6,84.6L48,87.2L45.4,89.6L42.6,86.6Z" fill="#B3B3B3"/><path d="M42,87L45,90.2L40.6,93.4L37.6,91.2Z" fill="#CDCDCD"/><path d="M41.2,86.2L45.8,90.8" stroke="#F1F1F1" stroke-width="0.8"/>
<path d="M108.8,108.8V104.8H112.8" fill="none" stroke="#8A8A8A" stroke-width="0.9"/><path d="M111.0,107.0L113.8,109.8M114.1,107.39999999999999V110.1H111.39999999999999" fill="none" stroke="#8A8A8A" stroke-width="0.9"/>
<rect x="126.6" y="52" width="20.8" height="16.6" rx="1.2" fill="#FAFAFA" stroke="#8C8C8C" stroke-width="1.1"/>
<rect x="130.4" y="55" width="14.4" height="3.6" fill="#BDBDBD"/><path d="M133,62.5H144.8M133,65H144.8" stroke="#B0B0B0" stroke-width="0.9"/><path d="M130.4,62.5h1.2M130.4,65h1.2" stroke="#B0B0B0" stroke-width="0.9"/>
<path d="M125.10,53.20L133.90,53.20M126.39,50.09L132.61,56.31M129.50,48.80L129.50,57.60M132.61,50.09L126.39,56.31" stroke="#F1B45C" stroke-width="1.2"/><circle cx="129.5" cy="53.2" r="1.3" fill="#FAFAFA"/>
<path d="M145.00,91.20h4.6l-2.3,2.6z" fill="#555"/>
<rect x="155.2" y="49.7" width="11.6" height="9.6" rx="0.6" fill="#FAFAFA" stroke="#7E7E7E" stroke-width="1"/><path d="M157,52H165M157,54.2H160M157,55.8H160M157,57.4H160M161.6,54.2H165M161.6,56.6H165" stroke="#A8A8A8" stroke-width="0.8"/>
<path d="M197.90,53.90h4.6l-2.3,2.6z" fill="#555"/>
<rect x="156.2" y="68.6" width="10.6" height="8.2" rx="0.6" fill="#FAFAFA" stroke="#7E7E7E" stroke-width="1"/><path d="M160,71.4H164.8M158.4,73.4H160M161.4,73.4H164.8M158.4,75H160M161.4,75H164.8" stroke="#A8A8A8" stroke-width="0.8"/>
<path d="M154.6,66.4H161V70.4H154.6Z" fill="#F1F1F1"/><path d="M156,71.6C155.6,69 157.6,67.4 159.6,67.6C160.8,67.7 161.6,68.4 162,69.4" fill="none" stroke="#3A79C2" stroke-width="1.2"/><path d="M154.6,69.2L156,72L158.2,70.2Z" fill="#3A79C2"/>
<rect x="159.9" y="88.8" width="7" height="6" rx="0.5" fill="#FAFAFA" stroke="#7E7E7E" stroke-width="1"/><path d="M161.4,91H165.4" stroke="#A8A8A8" stroke-width="0.8"/>
<rect x="159.4" y="85.6" width="8" height="2.8" fill="#E5583C"/><path d="M161,87H162.2M163,87H164.2M165,87H166.2" stroke="#FBD9CF" stroke-width="0.9"/><path d="M157.6,83.4L159.8,85.8L157.6,88.2L155.4,85.8Z" fill="#F6C995"/>
<path d="M200.30,88.10h4.6l-2.3,2.6z" fill="#555"/>
<path d="M282.40,59.80h4.2l-2.1,2.4z" fill="#ABABAB"/>
<path d="M316.70,59.80h4.2l-2.1,2.4z" fill="#ABABAB"/>
<path d="M335.4,57.6L337.2,55.6L339,57.6Z" fill="#B3B3B3"/><path d="M351.8,55.8H355.4L353.6,57.8Z" fill="#B3B3B3"/>
<path d="M368.4,62.4L371.4,55.4L374.2,62" fill="none" stroke="#B3B3B3" stroke-width="1"/><path d="M369.6,60.2H373" stroke="#B3B3B3" stroke-width="0.8"/><path d="M375.6,57.6L378.4,60L373.6,65.6L370.8,63.2Z" fill="#C8C8C8"/><path d="M369.6,64.4L372,66.6" stroke="#B3B3B3" stroke-width="1"/>
<path d="M302.4,87.6H312.6M304,86L302.4,87.6L304,89.2M311,86L312.6,87.6L311,89.2" fill="none" stroke="#B3B3B3" stroke-width="0.8"/>
<path d="M315.90,83.00h4.2l-2.1,2.4z" fill="#B3B3B3"/>
<path d="M341.00,83.00h4.2l-2.1,2.4z" fill="#B3B3B3"/>
<path d="M373.50,83.00h4.2l-2.1,2.4z" fill="#B3B3B3"/>
<path d="M375.6,108.8V104.8H379.6" fill="none" stroke="#B0B0B0" stroke-width="0.9"/><path d="M377.8,107.0L380.6,109.8M380.90000000000003,107.39999999999999V110.1H378.20000000000005" fill="none" stroke="#B0B0B0" stroke-width="0.9"/>
<path d="M394.3,55.8H400.4M394.3,60.3H400.4M394.3,64.9H400.4" stroke="#B3B3B3" stroke-width="0.9"/>
<rect x="391" y="55.099999999999994" width="1.4" height="1.4" fill="#B3B3B3"/>
<rect x="391" y="59.599999999999994" width="1.4" height="1.4" fill="#B3B3B3"/>
<rect x="391" y="64.2" width="1.4" height="1.4" fill="#B3B3B3"/>
<path d="M405.90,59.70h4.2l-2.1,2.4z" fill="#B3B3B3"/>
<path d="M420.0,55.8H426.8M420.0,60.3H426.8M420.0,64.9H426.8" stroke="#B3B3B3" stroke-width="0.9"/>
<path d="M416.6,54.5h1v2.6m-1,0h2" stroke="#B3B3B3" stroke-width="0.7" fill="none"/>
<path d="M416.6,59.0h1v2.6m-1,0h2" stroke="#B3B3B3" stroke-width="0.7" fill="none"/>
<path d="M416.6,63.60000000000001h1v2.6m-1,0h2" stroke="#B3B3B3" stroke-width="0.7" fill="none"/>
<path d="M431.40,59.70h4.2l-2.1,2.4z" fill="#B3B3B3"/>
<path d="M447.6,55.6H459.5M447.6,65.2H459.5M453.6,57.9H459.5M453.6,60.3H459.5M453.6,62.8H459.5" stroke="#B3B3B3" stroke-width="0.9"/><path d="M447.6,60.3L450.4,58V59.6H452.8V61H450.4V62.6Z" fill="#B3B3B3"/>
<path d="M464.0,55.6H476.0M464.0,65.2H476.0M470.2,57.9H476.0M470.2,60.3H476.0M470.2,62.8H476.0" stroke="#B3B3B3" stroke-width="0.9"/><path d="M469.4,60.3L466.6,58V59.6H464.2V61H466.6V62.6Z" fill="#B3B3B3"/>
<path d="M492.6,57.7H498.6M492.6,60.0H498.6M492.6,62.4H498.6M492.6,64.7H498.6" stroke="#B3B3B3" stroke-width="0.9"/><path d="M489.8,55.4V65.8M488.2,57L489.8,55.2L491.4,57M488.2,64.2L489.8,66L491.4,64.2" fill="none" stroke="#B3B3B3" stroke-width="0.8"/>
<path d="M502.00,59.70h4.2l-2.1,2.4z" fill="#B3B3B3"/>
<path d="M390.6,80.5H401.0M390.6,82.7H398.0M390.6,85.2H401.0M390.6,87.4H398.0M407.0,80.5H417.5M408.7,82.7H416.0M407.0,85.2H417.5M408.7,87.4H416.0M423.5,80.5H434.0M426.4,82.7H434.0M423.5,85.2H434.0M426.4,87.4H434.0M440.0,80.5H450.6M440.0,82.7H450.6M440.0,85.2H450.6M440.0,87.4H450.6" stroke="#B3B3B3" stroke-width="0.9"/>
<path d="M453.90,83.00h4.2l-2.1,2.4z" fill="#B3B3B3"/>
<path d="M472,81L475,83.9L472,86.8Z" fill="#B3B3B3"/><path d="M478.4,86.8V81.2H481.2M480.2,81.2V86.8" stroke="#B3B3B3" stroke-width="0.9" fill="none"/><path d="M478.6,81.2A1.6,1.6 0 0 0 478.6,84.4Z" fill="#B3B3B3"/>
<path d="M498,81L495,83.9L498,86.8Z" fill="#B3B3B3"/><path d="M491.2,86.8V81.2H494M493,81.2V86.8" stroke="#B3B3B3" stroke-width="0.9" fill="none"/><path d="M491.4,81.2A1.6,1.6 0 0 0 491.4,84.4Z" fill="#B3B3B3"/>
<path d="M511.2,80.7H515.8M516.8,80.7H521.2M511.2,83.0H515.8M516.8,83.0H521.2M511.2,85.4H515.8M516.8,85.4H521.2M511.2,87.7H515.8M516.8,87.7H521.2" stroke="#B3B3B3" stroke-width="0.9"/>
<path d="M525.20,83.00h4.2l-2.1,2.4z" fill="#B3B3B3"/>
<path d="M536.6,49.4V60M539.6,49.4V60M535.4,58.6L536.6,60.2L537.8,58.6M538.4,58.6L539.6,60.2L540.8,58.6" fill="none" stroke="#B3B3B3" stroke-width="0.8"/>
<path d="M541.6,54.6L544.2,49.6L546.8,54.6M543,60V55.4M545.4,60V55.4M542,58.6L543,60.2L544,58.6M544.4,58.6L545.4,60.2L546.4,58.6" fill="none" stroke="#B3B3B3" stroke-width="0.8"/>
<path d="M537.6,66.6H535.4V77.4H537.6M544.8,66.6H547V77.4H544.8" fill="none" stroke="#B3B3B3" stroke-width="0.9"/><path d="M538,71.2H544.4M538,73H544.4" stroke="#CFCFCF" stroke-width="0.9"/><path d="M541.2,66.4V69.6M539.8,68L541.2,66.4L542.6,68M541.2,77.6V74.4M539.8,76L541.2,77.6L542.6,76" fill="none" stroke="#B3B3B3" stroke-width="0.8"/>
<path d="M535.2,83.2H543.4L546.4,86.4H541.2V90.6H538.8L535.2,87.4H538.6Z" fill="#C2C2C2"/><rect x="539.2" y="87.8" width="7.8" height="7.2" fill="#F6F6F6" stroke="#B3B3B3" stroke-width="0.9"/><path d="M540.8,90.2H541.8M542.8,90.2H545.6M540.8,92.6H541.8M542.8,92.6H545.6" stroke="#B3B3B3" stroke-width="0.8"/>
<path d="M605.70,54.00h4.2l-2.1,2.4z" fill="#B3B3B3"/>
<path d="M590.70,71.00h4.2l-2.1,2.4z" fill="#B3B3B3"/>
<path d="M630.90,88.20h4.2l-2.1,2.4z" fill="#B3B3B3"/>
<path d="M635,108.8V104.8H639" fill="none" stroke="#B0B0B0" stroke-width="0.9"/><path d="M637.2,107.0L640,109.8M640.3,107.39999999999999V110.1H637.6" fill="none" stroke="#B0B0B0" stroke-width="0.9"/>
<rect x="650.4" y="52" width="10.2" height="9.2" fill="#fff" stroke="#5F5F5F" stroke-width="0.95"/><path d="M655.6,55H659M655.6,57H659M652,59.2H659" stroke="#A0A0A0" stroke-width="0.7"/><path d="M652,57.4L653.4,53.8L654.8,57.4M652.6,56.2H654.2" fill="none" stroke="#2F6FBE" stroke-width="0.8"/>
<path d="M665.6,51.8L676,61.8" stroke="#5F5F5F" stroke-width="0.95"/>
<path d="M680.8,51.8L690.8,61.2" stroke="#5F5F5F" stroke-width="0.95"/><path d="M691.6,62L688.2,61.2L690.8,58.6Z" fill="#5F5F5F"/>
<rect x="695.2" y="52.6" width="11.4" height="8.4" fill="none" stroke="#5F5F5F" stroke-width="0.95"/>
<ellipse cx="715.6" cy="56.7" rx="5.5" ry="4.2" fill="none" stroke="#5F5F5F" stroke-width="0.95"/>
<rect x="725" y="52.6" width="11.6" height="8.4" rx="2.2" fill="none" stroke="#5F5F5F" stroke-width="0.95"/>
<path d="M656,67.2L661,76.5H651Z" fill="none" stroke="#5F5F5F" stroke-width="0.95" stroke-linejoin="miter"/>
<path d="M665.6,67.6H671V76.4H676.8" fill="none" stroke="#5F5F5F" stroke-width="0.95"/>
<path d="M680.8,67.6H686V75.8H690.6" fill="none" stroke="#5F5F5F" stroke-width="0.95"/><path d="M692.2,75.8L689.4,74.2V77.4Z" fill="#5F5F5F"/>
<path d="M695.2,69.6H701V67L706.4,72L701,77V74.4H695.2Z" fill="none" stroke="#5F5F5F" stroke-width="0.95" stroke-linejoin="miter"/>
<path d="M713.2,66.8H718V72H720.8L715.6,77.2L710.4,72H713.2Z" fill="none" stroke="#5F5F5F" stroke-width="0.95" stroke-linejoin="miter"/>
<path d="M727.6,67.6H732.6C732,69.8 733.4,71 736.4,70.8V75Q736.4,76.6 734.8,76.6H727.4Q725.6,76.6 725.6,75V69.6Q725.6,67.6 727.6,67.6Z" fill="none" stroke="#5F5F5F" stroke-width="0.95"/>
<path d="M655.8,82C653,83.4 652.2,85.6 654.2,86.2C656.6,86.8 657.6,84.4 656.6,83.8C655,84.6 655.4,87.8 657.8,88.4C659.6,88.8 658.6,90.6 656.8,91.6M655.6,90L656.6,91.8L658.4,90.8" fill="none" stroke="#5F5F5F" stroke-width="0.95"/>
<path d="M665.8,82.6C671.6,82.8 675.8,86 676.6,91.6" fill="none" stroke="#5F5F5F" stroke-width="0.95"/>
<path d="M680.2,89.4C682,85 683.4,82.4 685.2,82.4C687.6,82.4 687.6,91.4 691.8,91.4" fill="none" stroke="#5F5F5F" stroke-width="0.95"/>
<path d="M702,82.4C700,82.4 701,86.4 699.4,86.5C701,86.6 700,90.6 702,90.6" fill="none" stroke="#5F5F5F" stroke-width="0.95"/>
<path d="M714.6,82.4C716.6,82.4 715.6,86.4 717.2,86.5C715.6,86.6 716.6,90.6 714.6,90.6" fill="none" stroke="#5F5F5F" stroke-width="0.95"/>
<path d="M730.60,81.80L731.95,85.54L735.93,85.67L732.79,88.11L733.89,91.93L730.60,89.70L727.31,91.93L728.41,88.11L725.27,85.67L729.25,85.54Z" fill="none" stroke="#5F5F5F" stroke-width="0.95" stroke-linejoin="miter"/>
<path d="M742.8,58L744.8,55.8L746.8,58Z" fill="#C4C4C4"/>
<path d="M742.70,71.00h4.2l-2.1,2.4z" fill="#555"/>
<path d="M742.6,84.8H747" stroke="#555" stroke-width="0.9"/><path d="M742.70,86.80h4.2l-2.1,2.4z" fill="#555"/>
<rect x="762.6" y="53.2" width="14.4" height="14.6" fill="#EDBD6E"/>
<rect x="770.6" y="55.4" width="0.9" height="0.9" fill="#F7DDA9"/><rect x="764.4" y="63.4" width="0.9" height="0.9" fill="#F7DDA9"/>
<rect x="772.8" y="55.4" width="0.9" height="0.9" fill="#F7DDA9"/><rect x="766.6" y="63.4" width="0.9" height="0.9" fill="#F7DDA9"/>
<rect x="775.0" y="55.4" width="0.9" height="0.9" fill="#F7DDA9"/><rect x="768.8" y="63.4" width="0.9" height="0.9" fill="#F7DDA9"/>
<rect x="759.4" y="50.4" width="9" height="9" fill="#fff" stroke="#7A7A7A" stroke-width="1"/><rect x="770.8" y="61.8" width="9" height="9" fill="#fff" stroke="#7A7A7A" stroke-width="1"/>
<path d="M767.90,91.20h4.6l-2.3,2.6z" fill="#555"/>
<rect x="794.6" y="51.6" width="19.6" height="19.2" rx="4.5" fill="#F4F4F4" stroke="#D2D2D2" stroke-width="1"/>
<path d="M816,56.8L809.6,65.4L807.6,63.8L814.6,55.6Z" fill="#BBBBBB"/><path d="M807.2,64.6L809,66.2C807.6,69.4 803.6,71.6 799.4,72C802.4,70.4 804.6,67.4 807.2,64.6Z" fill="#BBBBBB"/>
<path d="M814.10,91.30h4.2l-2.1,2.4z" fill="#B3B3B3"/>
<path d="M826.4,50L832.6,54.2L828.4,59L823.2,55.4Z" fill="#F6F6F6" stroke="#B3B3B3" stroke-width="0.9" stroke-linejoin="round"/><path d="M825.8,52.4C824.2,49.8 826.4,48.6 827.6,50.6" fill="none" stroke="#B3B3B3" stroke-width="0.8"/><path d="M832.8,55C834.4,57 834.2,58.4 833.2,58.6C832.2,58.4 832,57 832.8,55Z" fill="#B3B3B3"/><rect x="822.2" y="59.6" width="11.6" height="2" fill="#E0E0E0"/>
<path d="M828.8,66.6H822.8V74.2H826" fill="none" stroke="#B3B3B3" stroke-width="0.9"/><path d="M833.4,66.2L834.8,67.6L828.6,73.4L826.6,74L827.2,72Z" fill="#D8D8D8" stroke="#B3B3B3" stroke-width="0.7" stroke-linejoin="round"/>
<path d="M825.6,85H833.4Q834.4,85 834,86.2L832.4,91.4Q832,92.6 830.8,92.6H823.4Q822.2,92.6 822.6,91.4L824.2,86.2Q824.6,85 825.6,85Z" fill="#F7F7F7" stroke="#B3B3B3" stroke-width="0.9"/><path d="M823.2,93.4H831.4Q833,93.2 833.6,91.4" fill="none" stroke="#CFCFCF" stroke-width="1.2"/>
<path d="M876.10,54.00h4.2l-2.1,2.4z" fill="#B3B3B3"/>
<path d="M893.90,71.00h4.2l-2.1,2.4z" fill="#B3B3B3"/>
<path d="M890.90,88.20h4.2l-2.1,2.4z" fill="#B3B3B3"/>
<path d="M896.4,108.8V104.8H900.4" fill="none" stroke="#B0B0B0" stroke-width="0.9"/><path d="M898.6,107.0L901.4,109.8M901.6999999999999,107.39999999999999V110.1H899.0" fill="none" stroke="#B0B0B0" stroke-width="0.9"/>
<circle cx="917.8" cy="53.4" r="3" fill="#F1F1F1" stroke="#2E6DB4" stroke-width="1.3"/><path d="M915.6,55.8L912.4,59.2" stroke="#2E6DB4" stroke-width="1.7" stroke-linecap="round"/>
<path d="M911.4,74.4H913.6M912.4,73.2L913.8,74.4L912.4,75.6" fill="none" stroke="#2E6DB4" stroke-width="0.9"/>
<path d="M915.6,83.4V92.6L917.6,90.8L919,94L920.2,93.4L918.8,90.4H921.4Z" fill="#fff" stroke="#555" stroke-width="0.85" stroke-linejoin="round"/>
<path d="M962.90,71.00h4.2l-2.1,2.4z" fill="#555"/>
<path d="M950.10,88.20h4.2l-2.1,2.4z" fill="#555"/>
<path d="M1010,108.6L1013,105.6L1016,108.6" fill="none" stroke="#555" stroke-width="1.2"/>
<path d="M68,562H71.6Q72.8,562 72.8,563V571.4Q72.8,570.4 71.6,570.4H68ZM72.8,563Q72.8,562 74,562H75.4" fill="none" stroke="#5F5F5F" stroke-width="0.9"/><path d="M72.8,571.4Q72.8,570.4 74,570.4H75" fill="none" stroke="#5F5F5F" stroke-width="0.9"/><path d="M78.6,562.6L74.8,567.6L74.4,569.4L76,568.6L79.8,563.6Z" fill="#F1F1F1" stroke="#5F5F5F" stroke-width="0.8" stroke-linejoin="round"/>
<path d="M643.4,566.6H650.6M643.4,568.8H650.6M643.4,571H648.6" stroke="#5F5F5F" stroke-width="0.9"/><path d="M645.2,564.4L647,562.6L648.8,564.4" fill="none" stroke="#5F5F5F" stroke-width="0.9"/>
<path d="M693.4,562.6H702V568.6H697.6L695.4,571V568.6H693.4Z" fill="#5F5F5F"/>
<rect x="769.4" y="562.4" width="10.4" height="8.8" fill="none" stroke="#5F5F5F" stroke-width="1"/><rect x="771.6" y="564.4" width="6" height="3.6" fill="none" stroke="#5F5F5F" stroke-width="0.8"/><path d="M769.4,569.4H779.8" stroke="#5F5F5F" stroke-width="0.8"/>
<rect x="797.8" y="562.6" width="4" height="3.2" fill="none" stroke="#5F5F5F" stroke-width="0.9"/>
<rect x="797.8" y="567.8" width="4" height="3.2" fill="none" stroke="#5F5F5F" stroke-width="0.9"/>
<rect x="804.2" y="562.6" width="4" height="3.2" fill="none" stroke="#5F5F5F" stroke-width="0.9"/>
<rect x="804.2" y="567.8" width="4" height="3.2" fill="none" stroke="#5F5F5F" stroke-width="0.9"/>
<path d="M826,562.8H829.6Q830.8,562.8 830.8,563.8V571.2Q830.8,570.2 829.6,570.2H826ZM835.6,562.8H832Q830.8,562.8 830.8,563.8V571.2Q830.8,570.2 832,570.2H835.6Z" fill="none" stroke="#5F5F5F" stroke-width="0.9"/><path d="M828.2,562.8V570M833.4,562.8V570" stroke="#5F5F5F" stroke-width="0.7"/>
<path d="M854,562.6H864.6" stroke="#5F5F5F" stroke-width="1.2"/><path d="M855.2,563V568.4H863.4V563" fill="none" stroke="#5F5F5F" stroke-width="0.9"/><path d="M859.3,568.4V570.6M856.8,571.2H861.8" stroke="#5F5F5F" stroke-width="0.9"/>
<path d="M877.4,566.6H882.4" stroke="#5F5F5F" stroke-width="1.3"/><path d="M885.6,566.6H959.8" stroke="#8A8A8A" stroke-width="0.8"/><rect x="920.4" y="562" width="3.2" height="9.4" fill="#555"/><path d="M963,566.6H968.8M965.9,563.7V569.5" stroke="#5F5F5F" stroke-width="1.3"/>
<rect x="1009.2" y="562.8" width="9.6" height="8.6" fill="none" stroke="#5F5F5F" stroke-width="0.9"/><path d="M1011,566V564.6H1012.6M1015.4,564.6H1017V566M1017,568.4V569.8H1015.4M1012.6,569.8H1011V568.4" fill="none" stroke="#5F5F5F" stroke-width="0.9"/>
<path d="M186.0,122.0L188.4,119.19999999999999L190.8,122.0Z" fill="#555"/>
<path d="M1015.1,122.0L1017.5,119.19999999999999L1019.9,122.0Z" fill="#555"/>
<path d="M186.0,550.4L188.4,553.1999999999999L190.8,550.4Z" fill="#555"/>
<path d="M1015.3000000000001,484.0L1017.7,486.79999999999995L1020.1,484.0Z" fill="#555"/>
<path d="M1015.2,497.6L1017.6,495L1020.0,497.6ZM1015.2,500.8L1017.6,498.2L1020.0,500.8Z" fill="#555"/>
<path d="M1015.2,508.2L1017.6,510.8L1020.0,508.2ZM1015.2,511.4L1017.6,514L1020.0,511.4Z" fill="#555"/></svg>
</div></body></html>
